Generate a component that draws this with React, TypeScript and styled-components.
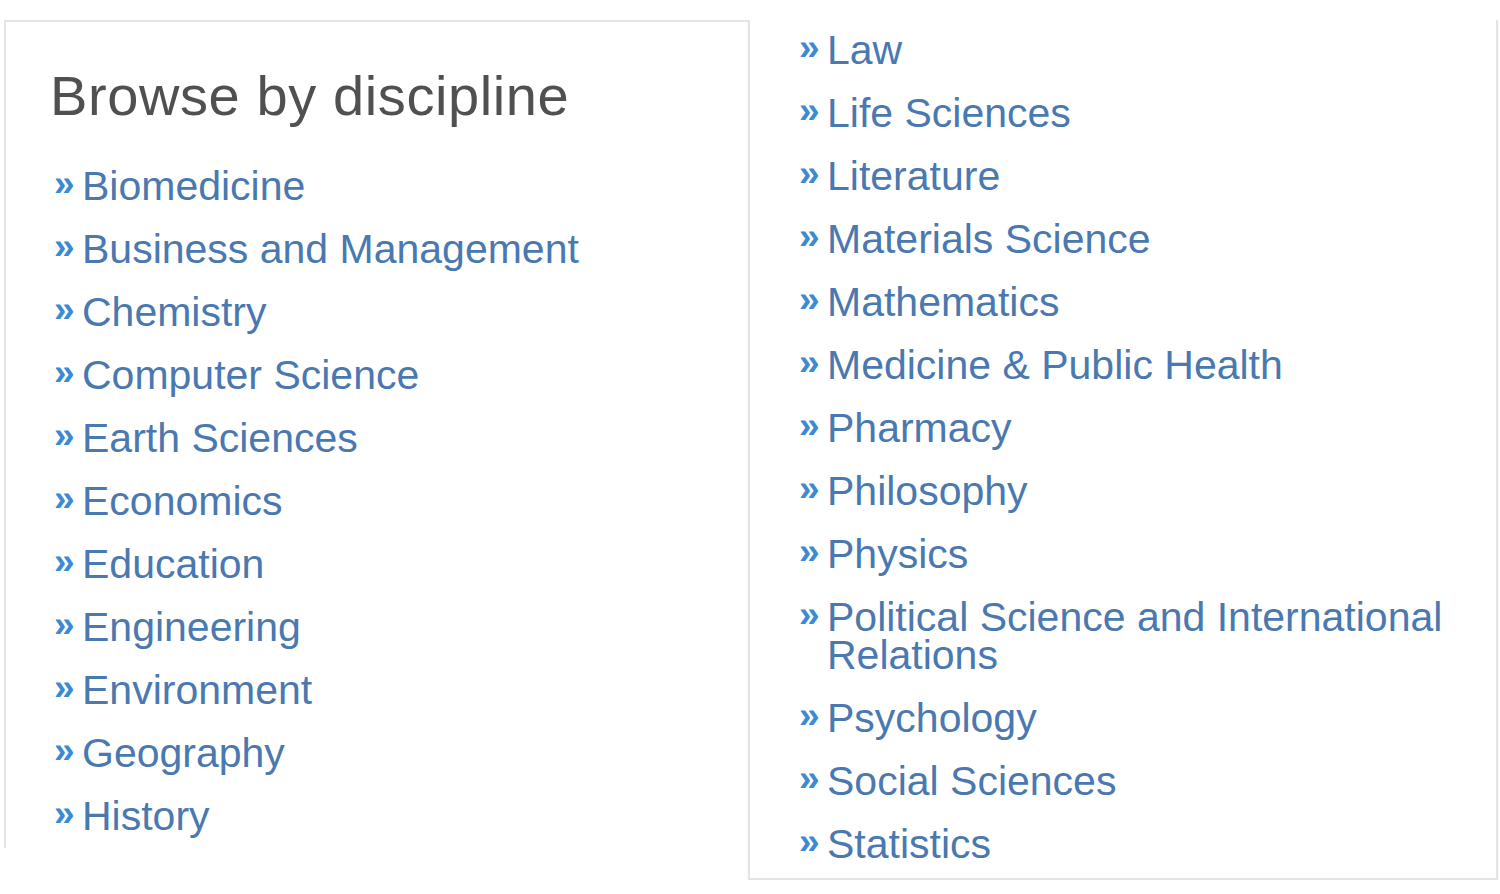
import styled, { createGlobalStyle } from 'styled-components';

const left = [
    'Biomedicine',
    'Business and Management',
    'Chemistry',
    'Computer Science',
    'Earth Sciences',
    'Economics',
    'Education',
    'Engineering',
    'Environment',
    'Geography',
    'History',
];

const right = [
    'Law',
    'Life Sciences',
    'Literature',
    'Materials Science',
    'Mathematics',
    'Medicine & Public Health',
    'Pharmacy',
    'Philosophy',
    'Physics',
    'Political Science and International Relations',
    'Psychology',
    'Social Sciences',
    'Statistics',
];

const GlobalStyle = createGlobalStyle`
    body {
        margin: 0;
        background: #fff;
        font-family: "Liberation Sans", Arial, sans-serif;
    }
`

const DisciplineList = ({ items }: { items: string[] }) => (
    <List>
        {items.map((name) => (
            <Item key={name}>
                <Marker>»</Marker>
                <Link href="#">{name}</Link>
            </Item>
        ))}
    </List>
);

export default function App() {
    return (
        <>
            <GlobalStyle />
            <Page>
                <LeftPanel>
                    <Title>Browse by discipline</Title>
                    <DisciplineList items={left} />
                </LeftPanel>
                <RightPanel>
                    <DisciplineList items={right} />
                </RightPanel>
            </Page>
        </>
    );
}

const Page = styled.div`
    display: flex;
    align-items: flex-start;
    padding: 20px 0 0 4px;
    width: 1500px;
    box-sizing: border-box;
`

const LeftPanel = styled.section`
    width: 752px;
    height: 828px;
    box-sizing: border-box;
    padding: 44px 0 0 49px;
    border-top: 2px solid #e4e4e4;
    border-left: 2px solid #e4e4e4;
    margin-right: -8px;
`

const RightPanel = styled.section`
    position: relative;
    width: 750px;
    height: 860px;
    box-sizing: border-box;
    padding: 11px 0 0 50px;
    background: #fff;
    border: 2px solid #e4e4e4;
    border-top: none;
    box-shadow: 0 2px 3px rgba(0, 0, 0, 0.06);
`

const Title = styled.h2`
    margin: 0 0 41px -5px;
    font-size: 56px;
    line-height: 60px;
    font-weight: normal;
    letter-spacing: 0.6px;
    color: #505050;
`

const List = styled.ul`
    list-style: none;
    margin: 0;
    padding: 0;
`

const Item = styled.li`
    display: flex;
    align-items: flex-start;
    margin-bottom: 25px;
    font-size: 41px;
    line-height: 38px;
`

const Marker = styled.span`
    flex: none;
    width: 28px;
    margin: -2px 0 0 -1px;
    font-size: 37px;
    font-weight: bold;
    color: #3a8ad4;
`

const Link = styled.a`
    color: #4a78b0;
    text-decoration: none;
`
